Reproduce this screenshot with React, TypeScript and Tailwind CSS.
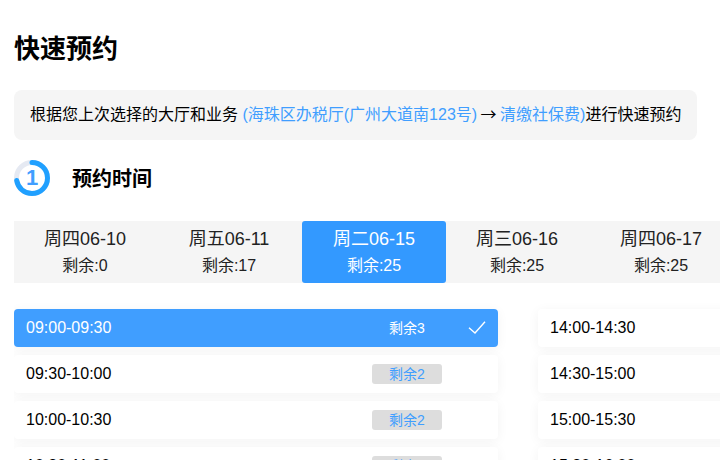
const days = [
  { label: "周四06-10", left: "剩余:0" },
  { label: "周五06-11", left: "剩余:17" },
  { label: "周二06-15", left: "剩余:25", active: true },
  { label: "周三06-16", left: "剩余:25" },
  { label: "周四06-17", left: "剩余:25" },
];

const morning = [
  { time: "09:00-09:30", left: "剩余3", active: true },
  { time: "09:30-10:00", left: "剩余2" },
  { time: "10:00-10:30", left: "剩余2" },
  { time: "10:30-11:00", left: "剩余2" },
];

const afternoon = [
  { time: "14:00-14:30", left: "剩余3" },
  { time: "14:30-15:00", left: "剩余2" },
  { time: "15:00-15:30", left: "剩余2" },
  { time: "15:30-16:00", left: "剩余2" },
];

type Slot = { time: string; left: string; active?: boolean };

function SlotRow({ slot }: { slot: Slot }) {
  return (
    <div
      className={`flex h-[38px] items-center rounded-[4px] pl-3 shadow-[0_2px_12px_rgba(0,0,0,0.05)] ${
        slot.active ? "bg-[#409eff] text-white" : "bg-white text-black"
      }`}
    >
      <span className="w-[346px] shrink-0 text-base">{slot.time}</span>
      <span
        className={`flex h-5 w-[70px] items-center justify-center rounded-[3px] text-sm ${
          slot.active ? "text-white" : "bg-[#dddddd] text-[#409eff]"
        }`}
      >
        {slot.left}
      </span>
      {slot.active && (
        <svg className="ml-[23px] h-5 w-5 overflow-visible" viewBox="0 0 20 20" fill="none" stroke="white" strokeWidth="1.4">
          <path d="M4 9.7 L10 15 L20 3.7" />
        </svg>
      )}
    </div>
  );
}

export default function App() {
  return (
    <main className="h-[460px] w-[720px] overflow-hidden bg-white pl-[14px] font-['Liberation_Sans','Noto_Sans_CJK_SC',sans-serif] text-black">
      <h1 className="pt-[31px] text-[26px] leading-[36px] font-bold">快速预约</h1>
      <div className="mt-[23px] flex h-[50px] w-[683px] items-center rounded-lg bg-[#f5f5f5] pl-4 text-base whitespace-nowrap">
        <span>
          根据您上次选择的大厅和业务 <span className="text-[#409eff]">(海珠区办税厅(广州大道南123号)</span>{" "}
          <span className="-mx-px font-['Noto_Sans_CJK_SC'] leading-none">→</span>{" "}
          <span className="text-[#409eff]">清缴社保费)</span>进行快速预约
        </span>
      </div>
      <div className="mt-5 flex h-9 items-center">
        <div className="relative h-9 w-9">
          <svg className="h-9 w-9" viewBox="0 0 36 36" fill="none" strokeWidth="5">
            <circle cx="18" cy="18" r="15.5" stroke="#e5e9f2" />
            <circle
              cx="18"
              cy="18"
              r="15.5"
              stroke="#20a0ff"
              strokeLinecap="round"
              strokeDasharray="70 97.4"
              transform="rotate(-90 18 18)"
            />
          </svg>
          <span className="absolute inset-0 flex items-center justify-center pb-px text-[22px] font-bold text-[#409eff]">1</span>
        </div>
        <h2 className="ml-[22px] pt-px text-xl font-bold">预约时间</h2>
      </div>
      <div className="mt-[25px] flex h-[62px] w-[720px] bg-[#f5f5f5]">
        {days.map((day) => (
          <div
            key={day.label}
            className={`flex w-36 shrink-0 flex-col items-center pt-[5px] ${
              day.active ? "rounded-[3px] bg-[#3399ff] text-white" : "pr-0.5 text-[#222222]"
            }`}
          >
            <span className="text-lg leading-[26px]">{day.label}</span>
            <span className="mt-px text-base leading-[26px]">{day.left}</span>
          </div>
        ))}
      </div>
      <div className="mt-[14px] w-[1008px] overflow-hidden pt-3">
        <div className="grid grid-cols-2 gap-x-10">
          <div className="flex flex-col gap-2">
            {morning.map((slot) => (
              <SlotRow key={slot.time} slot={slot} />
            ))}
          </div>
          <div className="flex flex-col gap-2">
            {afternoon.map((slot) => (
              <SlotRow key={slot.time} slot={slot} />
            ))}
          </div>
        </div>
      </div>
    </main>
  );
}
